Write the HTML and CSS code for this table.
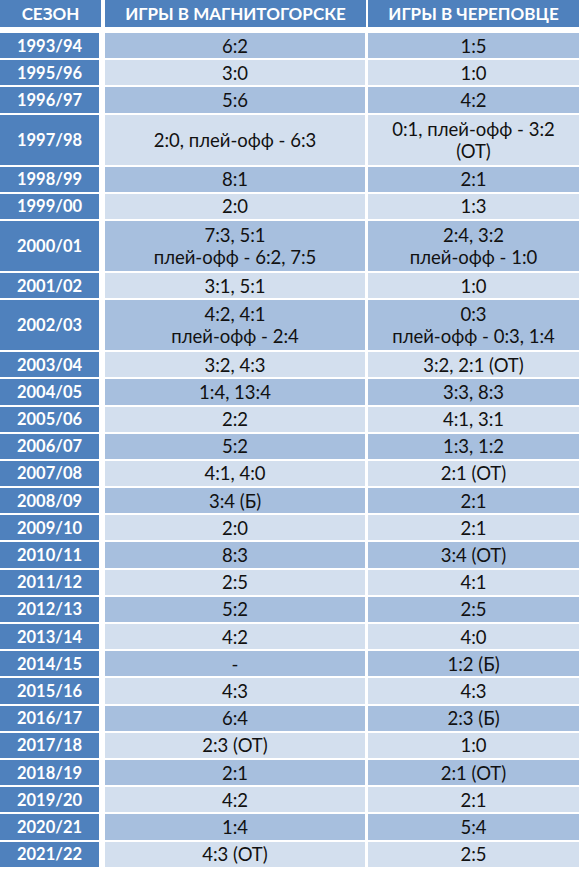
FILE: index.html
```html
<!DOCTYPE html>
<html lang="ru">

<head>
    <meta charset="UTF-8">
    <title>Магнитогорск - Череповец</title>
    <link rel="stylesheet" href="styles.css">
</head>

<body>

    <table class="games">
        <thead>
            <tr>
                <th>СЕЗОН</th>
                <th>ИГРЫ В МАГНИТОГОРСКЕ</th>
                <th>ИГРЫ В ЧЕРЕПОВЦЕ</th>
            </tr>
        </thead>
        <tbody>
            <tr class="dark"><td>1993/94</td><td>6:2</td><td>1:5</td></tr>
            <tr class="light"><td>1995/96</td><td>3:0</td><td>1:0</td></tr>
            <tr class="dark"><td>1996/97</td><td>5:6</td><td>4:2</td></tr>
            <tr class="light double"><td>1997/98</td><td>2:0, плей-офф - 6:3</td><td>0:1, плей-офф - 3:2<br>(ОТ)</td></tr>
            <tr class="dark"><td>1998/99</td><td>8:1</td><td>2:1</td></tr>
            <tr class="light"><td>1999/00</td><td>2:0</td><td>1:3</td></tr>
            <tr class="dark double"><td>2000/01</td><td>7:3, 5:1<br>плей-офф - 6:2, 7:5</td><td>2:4, 3:2<br>плей-офф - 1:0</td></tr>
            <tr class="light"><td>2001/02</td><td>3:1, 5:1</td><td>1:0</td></tr>
            <tr class="dark double"><td>2002/03</td><td>4:2, 4:1<br>плей-офф - 2:4</td><td>0:3<br>плей-офф - 0:3, 1:4</td></tr>
            <tr class="light"><td>2003/04</td><td>3:2, 4:3</td><td>3:2, 2:1 (ОТ)</td></tr>
            <tr class="dark"><td>2004/05</td><td>1:4, 13:4</td><td>3:3, 8:3</td></tr>
            <tr class="light"><td>2005/06</td><td>2:2</td><td>4:1, 3:1</td></tr>
            <tr class="dark"><td>2006/07</td><td>5:2</td><td>1:3, 1:2</td></tr>
            <tr class="light"><td>2007/08</td><td>4:1, 4:0</td><td>2:1 (ОТ)</td></tr>
            <tr class="dark"><td>2008/09</td><td>3:4 (Б)</td><td>2:1</td></tr>
            <tr class="light"><td>2009/10</td><td>2:0</td><td>2:1</td></tr>
            <tr class="dark"><td>2010/11</td><td>8:3</td><td>3:4 (ОТ)</td></tr>
            <tr class="light"><td>2011/12</td><td>2:5</td><td>4:1</td></tr>
            <tr class="dark"><td>2012/13</td><td>5:2</td><td>2:5</td></tr>
            <tr class="light"><td>2013/14</td><td>4:2</td><td>4:0</td></tr>
            <tr class="dark"><td>2014/15</td><td>-</td><td>1:2 (Б)</td></tr>
            <tr class="light"><td>2015/16</td><td>4:3</td><td>4:3</td></tr>
            <tr class="dark"><td>2016/17</td><td>6:4</td><td>2:3 (Б)</td></tr>
            <tr class="light"><td>2017/18</td><td>2:3 (ОТ)</td><td>1:0</td></tr>
            <tr class="dark"><td>2018/19</td><td>2:1</td><td>2:1 (ОТ)</td></tr>
            <tr class="light"><td>2019/20</td><td>4:2</td><td>2:1</td></tr>
            <tr class="dark"><td>2020/21</td><td>1:4</td><td>5:4</td></tr>
            <tr class="light"><td>2021/22</td><td>4:3 (ОТ)</td><td>2:5</td></tr>
        </tbody>
    </table>

</body>

</html>
```

FILE: styles.css
```css
* {
    margin: 0;
    padding: 0;
    box-sizing: border-box;
}

body {
    background-color: #fff;
    font-family: Lato, "Open Sans", sans-serif;
    color: #111;
}

.games {
    width: 579px;
    border-collapse: separate;
    border-spacing: 0;
    table-layout: fixed;
}

/* Header row */
.games th {
    height: 33px;
    background-color: #4f81bd;
    background-clip: content-box;
    color: #fff;
    font-size: 17px;
    font-weight: bold;
    text-align: center;
    padding-bottom: 6px;
    border-right: 2px solid #fff;
}

.games th:first-child {
    width: 105px;
    border-right-width: 4px;
}

.games th:nth-child(2) {
    width: 263px;
}

.games th:last-child {
    border-right: 0;
}

/* Body rows */
.games td {
    height: 27.2px;
    border-bottom: 2px solid #fff;
    border-right: 3px solid #fff;
    text-align: center;
    font-size: 18.5px;
    line-height: 22px;
}

.games td:first-child {
    background-color: #4f81bd;
    color: #fff;
    font-size: 16.5px;
    font-weight: bold;
    border-right-width: 6px;
}

.games td:last-child {
    border-right: 0;
}

.games .double td {
    height: 52px;
}

.dark td {
    background-color: #a7bfde;
}

.light td {
    background-color: #d3dfee;
}
```
